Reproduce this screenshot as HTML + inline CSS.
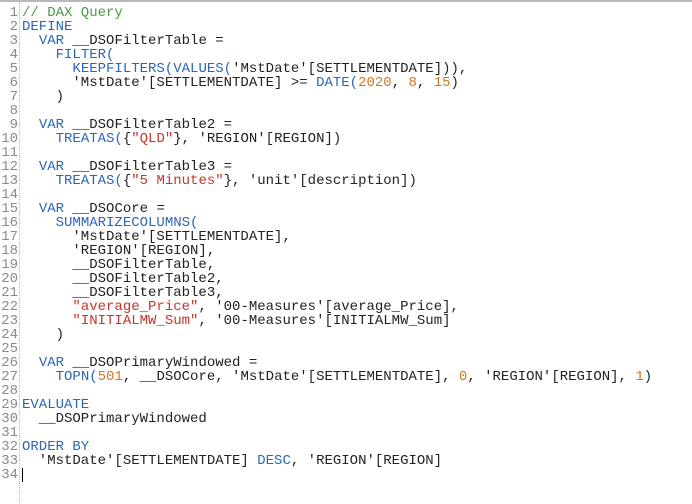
<!DOCTYPE html>
<html><head><style>
html,body{margin:0;padding:0;background:#fff;width:692px;height:504px;overflow:hidden}
.top{position:absolute;left:0;top:0;width:692px;height:2px;background:#b9b9b9}
.gut{position:absolute;left:19px;top:3px;height:501px;border-left:1px dotted #bbb}
pre{position:absolute;margin:0;top:6px;font-family:"Liberation Mono",monospace;font-size:14px;line-height:14px;letter-spacing:-0.0px}
.n{left:0;width:18px;text-align:right;color:#8a8a8a}
.c{left:22px;color:#222}
.k{color:#2b66b8}.s{color:#c8332a}.g{color:#4d9a44}.o{color:#d2761c}
.cur{display:inline-block;width:1px;height:14px;background:#000;vertical-align:top}
</style></head><body>
<div class="top"></div><div class="gut"></div>
<pre class="n">1
2
3
4
5
6
7
8
9
10
11
12
13
14
15
16
17
18
19
20
21
22
23
24
25
26
27
28
29
30
31
32
33
34</pre>
<pre class="c"><span class="g">// DAX Query</span>
<span class="k">DEFINE</span>
  <span class="k">VAR</span> __DSOFilterTable =
    <span class="k">FILTER(</span>
      <span class="k">KEEPFILTERS(VALUES(</span>'MstDate'[SETTLEMENTDATE])),
      'MstDate'[SETTLEMENTDATE] &gt;= <span class="k">DATE(</span><span class="o">2020</span>, <span class="o">8</span>, <span class="o">15</span>)
    )

  <span class="k">VAR</span> __DSOFilterTable2 =
    <span class="k">TREATAS(</span>{<span class="s">"QLD"</span>}, 'REGION'[REGION])

  <span class="k">VAR</span> __DSOFilterTable3 =
    <span class="k">TREATAS(</span>{<span class="s">"5 Minutes"</span>}, 'unit'[description])

  <span class="k">VAR</span> __DSOCore =
    <span class="k">SUMMARIZECOLUMNS(</span>
      'MstDate'[SETTLEMENTDATE],
      'REGION'[REGION],
      __DSOFilterTable,
      __DSOFilterTable2,
      __DSOFilterTable3,
      <span class="s">"average_Price"</span>, '00-Measures'[average_Price],
      <span class="s">"INITIALMW_Sum"</span>, '00-Measures'[INITIALMW_Sum]
    )

  <span class="k">VAR</span> __DSOPrimaryWindowed =
    <span class="k">TOPN(</span><span class="o">501</span>, __DSOCore, 'MstDate'[SETTLEMENTDATE], <span class="o">0</span>, 'REGION'[REGION], <span class="o">1</span>)

<span class="k">EVALUATE</span>
  __DSOPrimaryWindowed

<span class="k">ORDER BY</span>
  'MstDate'[SETTLEMENTDATE] <span class="k">DESC</span>, 'REGION'[REGION]
<span class="cur"></span></pre>
</body></html>
